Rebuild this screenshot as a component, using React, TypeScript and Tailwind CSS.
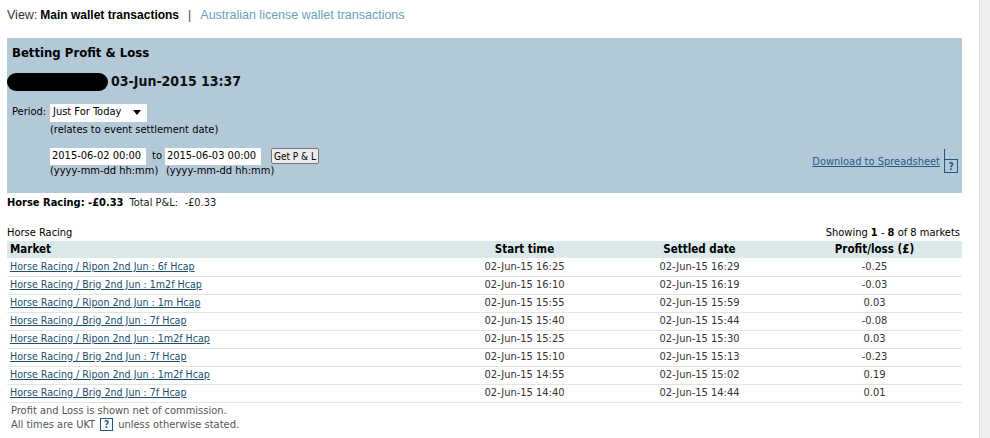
import React from "react";

const rows = [
  ["Horse Racing / Ripon 2nd Jun : 6f Hcap", "02-Jun-15 16:25", "02-Jun-15 16:29", "-0.25"],
  ["Horse Racing / Brig 2nd Jun : 1m2f Hcap", "02-Jun-15 16:10", "02-Jun-15 16:19", "-0.03"],
  ["Horse Racing / Ripon 2nd Jun : 1m Hcap", "02-Jun-15 15:55", "02-Jun-15 15:59", "0.03"],
  ["Horse Racing / Brig 2nd Jun : 7f Hcap", "02-Jun-15 15:40", "02-Jun-15 15:44", "-0.08"],
  ["Horse Racing / Ripon 2nd Jun : 1m2f Hcap", "02-Jun-15 15:25", "02-Jun-15 15:30", "0.03"],
  ["Horse Racing / Brig 2nd Jun : 7f Hcap", "02-Jun-15 15:10", "02-Jun-15 15:13", "-0.23"],
  ["Horse Racing / Ripon 2nd Jun : 1m2f Hcap", "02-Jun-15 14:55", "02-Jun-15 15:02", "0.19"],
  ["Horse Racing / Brig 2nd Jun : 7f Hcap", "02-Jun-15 14:40", "02-Jun-15 14:44", "0.01"],
];

const tahoma = { fontFamily: '"DejaVu Sans Condensed", "DejaVu Sans", sans-serif' } as const;

export default function App() {
  return (
    <div className="flex w-[990px] h-[438px] bg-white overflow-hidden text-[#222]" style={tahoma}>
      <div className="flex-1 pl-[7px] pr-[17px]">
        <div className="h-[28px] pt-[2px] flex items-center text-[12.5px] font-['Liberation_Sans',sans-serif] text-[#333]">
          <span>View:</span>
          <b className="ml-[3px] text-black text-[12px]">Main wallet transactions</b>
          <span className="mx-[9px] text-[#444]">|</span>
          <span className="text-[#6aa2b8]">Australian license wallet transactions</span>
        </div>
        <div className="mt-[10px] h-[155px] bg-[#b4c9d8] relative">
          <div className="pt-[5px] pl-[5px] text-[13px] font-bold text-black">Betting Profit &amp; Loss</div>
          <div className="mt-[9px] flex items-center h-[20px]">
            <div className="w-[101px] h-[18px] rounded-full bg-black" />
            <span className="ml-[3px] text-[14px] font-bold text-[#111]">03-Jun-2015 13:37</span>
          </div>
          <div className="mt-[12px] flex items-center text-[11px] text-black">
            <span className="w-[43px] pl-[5px]">Period:</span>
            <div className="w-[97px] h-[18px] bg-white flex items-center justify-between pl-[3px] pr-[6px]">
              <span>Just For Today</span>
              <svg width="8" height="5" viewBox="0 0 8 5"><path d="M0 0H8L4 5Z" fill="#000" /></svg>
            </div>
          </div>
          <div className="pl-[43px] mt-[1px] text-[11px] text-black leading-[14px]">(relates to event settlement date)</div>
          <div className="pl-[43px] mt-[11px] flex items-center text-[11px] text-black">
            <div className="w-[96px] h-[17px] bg-white flex items-center pl-[2px]">2015-06-02 00:00</div>
            <span className="ml-[6px] mr-[3px]">to</span>
            <div className="w-[96px] h-[17px] bg-white flex items-center pl-[2px]">2015-06-03 00:00</div>
            <div className="ml-[10px] h-[16px] px-[2px] border border-[#777] rounded-[2px] bg-[#ececec] flex items-center text-[10px]">Get P &amp; L</div>
          </div>
          <div className="pl-[43px] flex text-[11px] text-black leading-[12px]">
            <span className="w-[116px]">(yyyy-mm-dd hh:mm)</span>
            <span>(yyyy-mm-dd hh:mm)</span>
          </div>
          <div className="absolute right-[4px] top-[111px] flex items-end">
            <span className="text-[11px] text-[#1f5a87] underline mb-[3px]">Download to Spreadsheet</span>
            <div className="ml-[4px] flex flex-col items-end">
              <div className="w-[1px] h-[10px] bg-[#1f5a87] mr-[13px]" />
              <div className="w-[14px] h-[14px] border border-[#1f5a87] text-[#1f5a87] text-[10px] font-bold flex items-center justify-center">?</div>
            </div>
          </div>
        </div>
        <div className="mt-[2px] text-[11px] flex items-baseline h-[14px]">
          <b className="text-[11px] text-black">Horse Racing: -£0.33</b>
          <span className="ml-[6px] text-[#222]">Total P&amp;L:&nbsp; -£0.33</span>
        </div>
        <div className="mt-[18px] flex justify-between text-[11px] text-black h-[12px] leading-[12px]">
          <span>Horse Racing</span>
          <span className="mr-[2px]">Showing <b>1</b> - <b>8</b> of 8 markets</span>
        </div>
        <table className="w-full mt-[2px] text-[11px] border-collapse">
          <thead>
            <tr className="bg-[#dce9ea] h-[17px] text-[11.5px] text-black">
              <th className="text-left pl-[3px] font-bold">Market</th>
              <th className="font-bold w-[175px]">Start time</th>
              <th className="font-bold w-[175px]">Settled date</th>
              <th className="font-bold w-[175px]">Profit/loss (£)</th>
            </tr>
          </thead>
          <tbody>
            {rows.map((r, i) => (
              <tr key={i} className="h-[18px] border-b border-[#e3e3e3] text-[#333]">
                <td className="pl-[3px]"><span className="text-[#1a4f6e] underline text-[10.6px]">{r[0]}</span></td>
                <td className="text-center">{r[1]}</td>
                <td className="text-center">{r[2]}</td>
                <td className="text-center">{r[3]}</td>
              </tr>
            ))}
          </tbody>
        </table>
        <div className="mt-[1px] pl-[4px] text-[11px] text-[#555] leading-[14px]">
          <div>Profit and Loss is shown net of commission.</div>
          <div className="flex items-center">
            All times are UKT
            <span className="mx-[5px] w-[13px] h-[13px] border border-[#1f5a87] text-[#1f5a87] text-[10px] font-bold flex items-center justify-center">?</span>
            unless otherwise stated.
          </div>
        </div>
      </div>
      <div className="w-[11px] h-full bg-[#eeeeee] border-l border-[#dcdcdc]" />
    </div>
  );
}
